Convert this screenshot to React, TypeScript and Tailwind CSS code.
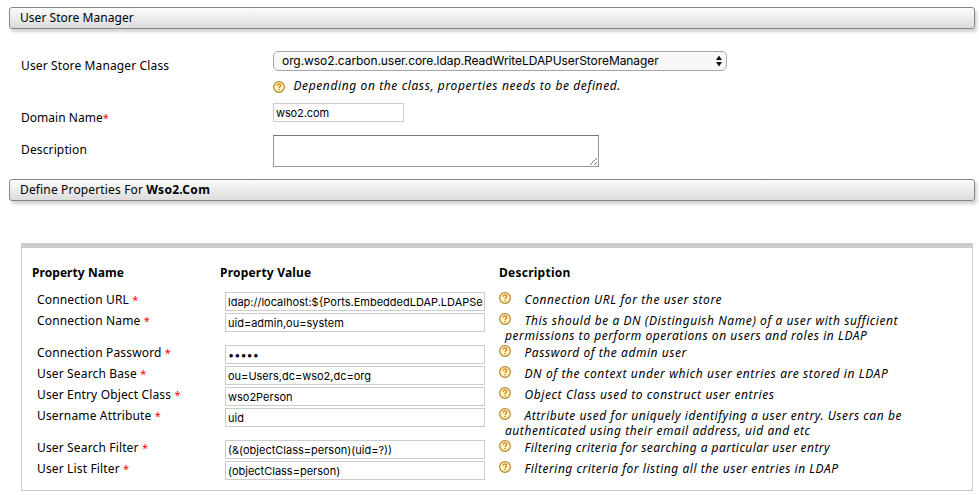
import { ReactNode } from 'react';

const sans = "font-['Noto_Sans','Open_Sans',sans-serif]";
const field = "font-['Inter','Liberation_Sans',sans-serif]";

function HelpIcon({ className = '' }: { className?: string }) {
  return (
    <svg width="12" height="12" viewBox="0 0 12 12" className={`shrink-0 ${className}`}>
      <circle cx="6" cy="6" r="5.35" fill="#fdf6c4" stroke="#b38a2c" strokeWidth="1.2" />
      <path d="M4.2 4.7C4.2 3.5 5 3 6 3s1.8.6 1.8 1.5C7.8 5.6 6.1 5.7 6.1 7" fill="none" stroke="#e8821e" strokeWidth="1.3" />
      <rect x="5.4" y="7.9" width="1.4" height="1.4" fill="#e8821e" />
    </svg>
  );
}

function Required() {
  return <span className="text-[11px] text-[#f00]">*</span>;
}

function Bar({ children }: { children: ReactNode }) {
  return (
    <h2 className="ml-[9px] flex h-[22px] w-[966px] items-center rounded-[3px] border border-[#868686] bg-linear-to-b from-[#fcfcfc] to-[#dcdcdc] pb-[2px] pl-[10px] text-[12px] leading-[15px] shadow-[2px_3px_3px_#d4d2d4]">
      <span className="whitespace-pre">{children}</span>
    </h2>
  );
}

type Row = { name: string; value: string; lines: string[]; track: string; tall?: boolean };

const rows: Row[] = [
  { name: 'Connection URL', value: 'ldap://localhost:${Ports.EmbeddedLDAP.LDAPSe', lines: ['Connection URL for the user store'], track: 'tracking-[0.6px]' },
  { name: 'Connection Name', value: 'uid=admin,ou=system', lines: ['This should be a DN (Distinguish Name) of a user with sufficient', 'permissions to perform operations on users and roles in LDAP'], track: 'tracking-[0.57px]', tall: true },
  { name: 'Connection Password', value: '•••••', lines: ['Password of the admin user'], track: 'tracking-[0.55px]' },
  { name: 'User Search Base', value: 'ou=Users,dc=wso2,dc=org', lines: ['DN of the context under which user entries are stored in LDAP'], track: 'tracking-[0.61px]' },
  { name: 'User Entry Object Class', value: 'wso2Person', lines: ['Object Class used to construct user entries'], track: 'tracking-[0.6px]' },
  { name: 'Username Attribute', value: 'uid', lines: ['Attribute used for uniquely identifying a user entry. Users can be', 'authenticated using their email address, uid and etc'], track: 'tracking-[0.55px]', tall: true },
  { name: 'User Search Filter', value: '(&(objectClass=person)(uid=?))', lines: ['Filtering criteria for searching a particular user entry'], track: 'tracking-[0.45px]' },
  { name: 'User List Filter', value: '(objectClass=person)', lines: ['Filtering criteria for listing all the user entries in LDAP'], track: 'tracking-[0.52px]' },
];

export default function App() {
  return (
    <main className={`h-[495px] w-[979px] overflow-hidden bg-white pt-[7px] text-[12px] leading-[15px] text-black ${sans}`}>
      <Bar><span className="tracking-[0.04px]">User Store Manager</span></Bar>

      <section className="flex h-[150px] pl-[21px] pt-[22px]">
        <div className="w-[252px] tracking-[0.13px]">
          <div className="h-[52px] pt-[7px]">User Store Manager Class</div>
          <div className="h-[32px] pt-[7px]"><span className="tracking-[0.03px]">Domain Name</span><Required /></div>
          <div className="pt-[7px]">Description</div>
        </div>
        <div>
          <div className={`flex h-[20px] w-[454px] items-center justify-between rounded-[5px] border border-[#a6a6a6] bg-[#f8f8f8] pb-px pl-[8px] pr-[4px] tracking-[-0.07px] ${field}`}>
            <span>org.wso2.carbon.user.core.ldap.ReadWriteLDAPUserStoreManager</span>
            <svg width="6" height="12" viewBox="0 0 6 12"><path d="M3 0.5 6 5H0ZM3 11.5 0 7H6Z" fill="#111" /></svg>
          </div>
          <div className="flex h-[32px] pt-[8px]">
            <HelpIcon className="mt-[2px]" />
            <span className="-mt-px ml-[8.5px] italic tracking-[0.61px]">Depending on the class, properties needs to be defined.</span>
          </div>
          <div className={`h-[19px] w-[131px] border border-[#ccc] pl-[2px] pt-[2px] text-[11px] tracking-[-0.1px] ${field}`}>wso2.com</div>
          <div className="mt-[13px] flex h-[32px] w-[326px] items-end justify-end border border-[#999] border-t-[#777]">
            <svg width="9" height="9" viewBox="0 0 9 9"><path d="M1 8 8 1M5 8 8 5" stroke="#777" strokeWidth="1" fill="none" /></svg>
          </div>
        </div>
      </section>

      <Bar><span className="tracking-[0.15px]">Define Properties For </span><b className="tracking-[0.28px]">Wso2.Com</b></Bar>

      <section className="ml-[21px] mt-[42px] h-[248px] w-[952px] border border-t-[5px] border-[#ccc] pt-[17px]">
        <div className="flex h-[26px] pl-[10px] font-bold">
          <div className="w-[188px] tracking-[0.06px]">Property Name</div>
          <div className="w-[279px] tracking-[0.2px]">Property Value</div>
          <div className="tracking-[0.25px]">Description</div>
        </div>
        {rows.map((r) => (
          <div key={r.name} className={`flex pl-[15px] ${r.tall ? 'h-[32px]' : 'h-[21px]'}`}>
            <div className="w-[188px] pt-[1px] tracking-[0.15px]">{r.name} <Required /></div>
            <div className={`mt-px h-[19px] w-[260px] whitespace-nowrap border border-[#ccc] pl-[2px] pt-[2px] text-[11px] ${field}`}>{r.value}</div>
            <HelpIcon className="ml-[14px] mt-[1px]" />
            <div className={`-ml-[6px] whitespace-nowrap pt-[1px] italic ${r.track}`}>
              <div className="pl-[19.5px]">{r.lines[0]}</div>
              {r.lines[1] && <div>{r.lines[1]}</div>}
            </div>
          </div>
        ))}
      </section>
    </main>
  );
}
